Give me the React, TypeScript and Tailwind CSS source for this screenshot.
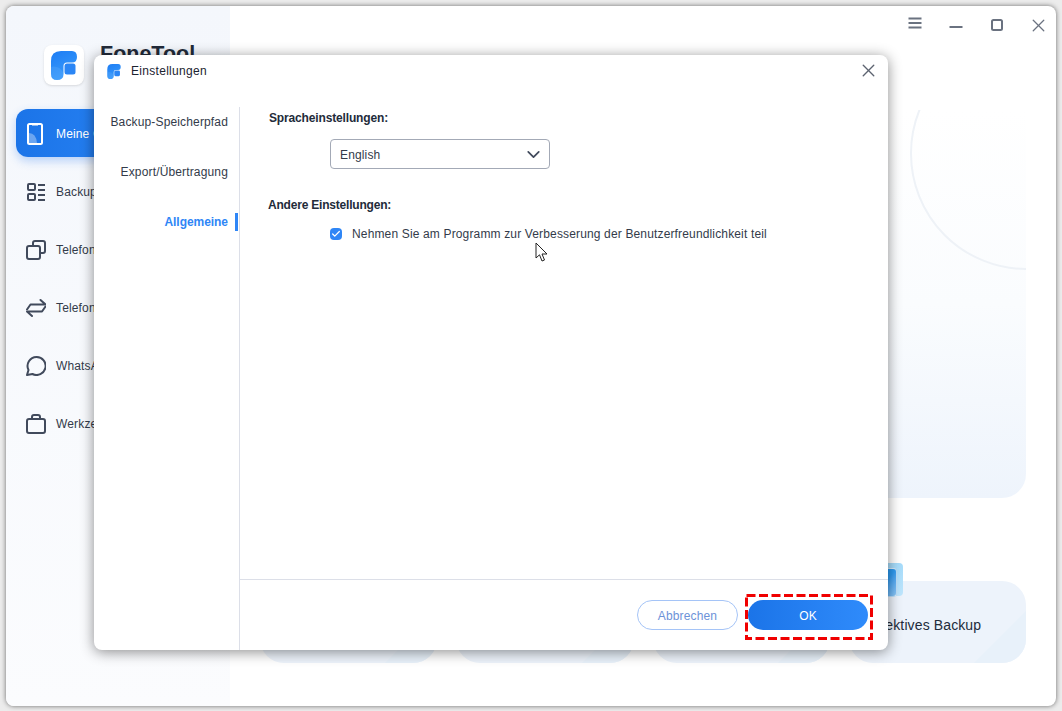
import { ChevronDown, Check, X } from "lucide-react";

function LogoMark({ id, width, height }: { id: string; width: number; height: number }) {
  return (
    <svg width={width} height={height} viewBox="0 0 26 29" className="shrink-0">
      <defs>
        <linearGradient id={id} x1="0.2" y1="0" x2="0.6" y2="1">
          <stop offset="0" stopColor="#1f7ff5" />
          <stop offset="1" stopColor="#3a9cfb" />
        </linearGradient>
      </defs>
      <path d="M10 0 H21 Q26 0 26 6 Q26 11.5 21 11.5 H16 Q12.5 11.5 12.5 15 V23 Q12.5 29 6 29 Q0 29 0 23 V10 Q0 0 10 0 Z" fill={`url(#${id})`} />
      <path d="M0 16 Q8 14 12.5 22 V23 Q12.5 29 6 29 Q0 29 0 23 Z" fill="#7cc0ff" opacity="0.2" />
      <rect x="13.5" y="12.5" width="11" height="11" rx="2.5" fill="#2b86f5" />
    </svg>
  );
}

function PhoneIcon() {
  return (
    <svg width="16" height="22" viewBox="0 0 16 22" fill="none">
      <rect x="1" y="1" width="14" height="20" rx="1.5" stroke="#fff" strokeWidth="2" />
      <path d="M5 1 H11 V2.5 H5 Z" fill="#fff" />
      <path d="M2 10 Q9 10 10 20 H2 Z" fill="#fff" opacity="0.35" />
    </svg>
  );
}

function NavIcon({ children }: { children: React.ReactNode }) {
  return (
    <svg width="20" height="20" viewBox="0 0 20 20" fill="none" stroke="#414a5c" strokeWidth="2" strokeLinecap="round" strokeLinejoin="round">
      {children}
    </svg>
  );
}

const navItems = [
  {
    label: "Backup",
    icon: (
      <NavIcon>
        <rect x="2" y="2" width="7" height="6" rx="1" />
        <rect x="2" y="12" width="7" height="6" rx="1" />
        <path d="M12 3 H19 M12 8 H19 M12 13 H19 M12 18 H19" strokeLinecap="butt" />
      </NavIcon>
    ),
  },
  {
    label: "Telefon-Klon",
    icon: (
      <NavIcon>
        <rect x="1" y="6" width="13" height="13" rx="2" />
        <path d="M7 5 V3 Q7 1 9 1 H17 Q19 1 19 3 V11 Q19 13 17 13 H15" />
      </NavIcon>
    ),
  },
  {
    label: "Telefon-Transfer",
    icon: (
      <NavIcon>
        <path d="M1 11.5 L4.5 6.5 H19.5 L14.5 2" />
        <path d="M19.5 8.5 L16 13.5 H1 L6 18" />
      </NavIcon>
    ),
  },
  {
    label: "WhatsApp",
    icon: (
      <NavIcon>
        <path d="M10.5 1 A9 9 0 1 1 6.5 18 L1 19 L2.5 14 A9 9 0 0 1 10.5 1 Z" />
      </NavIcon>
    ),
  },
  {
    label: "Werkzeuge",
    icon: (
      <NavIcon>
        <rect x="1" y="5" width="18" height="14" rx="2" />
        <path d="M6 5 V3 Q6 1 8 1 H12 Q14 1 14 3 V5" />
      </NavIcon>
    ),
  },
];

function Sidebar() {
  return (
    <aside className="w-[224px] shrink-0 bg-gradient-to-b from-[#f4f7fc] to-[#fbfcfe] pl-[10px] pt-[39px] tracking-[0.15px]">
      <div className="flex items-start gap-4 pl-[28px]">
        <div className="flex h-10 w-10 items-center justify-center rounded-lg bg-white shadow-sm">
          <LogoMark id="logo-big" width={26} height={29} />
        </div>
        <span className="-mt-[1px] text-[21.5px] font-bold leading-none tracking-normal text-[#222b3a]">FoneTool</span>
      </div>
      <div className="mt-6 flex h-12 w-[198px] items-center gap-[12px] rounded-xl bg-gradient-to-r from-[#1b74e8] to-[#2f8bfb] pl-[10px] pt-px text-xs text-white shadow-[0_4px_10px_rgba(40,120,240,0.3)]">
        <span className="flex w-[18px] justify-center"><PhoneIcon /></span>
        <span>Meine Geräte</span>
      </div>
      <div className="mt-[6px]">
        {navItems.map((item) => (
          <div key={item.label} className="flex h-[58px] items-center gap-[8px] pl-[8px] text-xs text-[#333b4a]">
            <span className="flex w-[24px] justify-center">{item.icon}</span>
            <span>{item.label}</span>
          </div>
        ))}
      </div>
    </aside>
  );
}

function BackupCard({ label, tile }: { label?: string; tile?: boolean }) {
  return (
    <div className="relative flex h-[82px] flex-1 items-center rounded-3xl bg-[#edf3fb] pl-[16px] pt-[6px] text-sm tracking-[0.12px] text-[#222b3a]">
      {tile && (
        <div className="absolute left-[24px] top-[-18px] h-[33px] w-[30px] rounded bg-gradient-to-b from-[#a6dcfb] to-[#bfe6fd]">
          <div className="mt-[5px] h-[29px] w-[24px] rounded-sm border border-white/70 bg-gradient-to-br from-[#0d94f2] via-[#2f9cf2] to-[#8cc8f8]" />
        </div>
      )}
      <svg className="absolute bottom-0 right-0 overflow-hidden rounded-br-3xl" width="130" height="82" viewBox="0 0 130 82">
        <path d="M130 30 L78 82 H130 Z" fill="#e8f1fa" />
      </svg>
      <span className="relative whitespace-nowrap">{label}</span>
    </div>
  );
}

function Main() {
  return (
    <main className="flex min-w-0 flex-1 flex-col pl-[30px] pr-[30px]">
      <div className="-mr-[30px] flex h-[38px] items-center justify-end gap-[5px] text-[#6a7280]">
        <span className="flex w-[36px] justify-center">
          <svg width="14" height="14" viewBox="0 0 14 14" stroke="currentColor" strokeWidth="2" className="-mt-[4px]">
            <path d="M0.5 2.5 H13.5 M0.5 7 H13.5 M0.5 11.5 H13.5" />
          </svg>
        </span>
        <span className="flex w-[36px] justify-center">
          <svg width="14" height="4" viewBox="0 0 14 4" stroke="currentColor" strokeWidth="2" className="mt-[4px]">
            <path d="M0.5 2 H13.5" />
          </svg>
        </span>
        <span className="flex w-[36px] justify-center">
          <svg width="12" height="12" viewBox="0 0 12 12" fill="none" stroke="currentColor" strokeWidth="2">
            <rect x="1" y="1" width="10" height="10" rx="1.5" />
          </svg>
        </span>
        <span className="flex w-[36px] justify-center">
          <X size={21} strokeWidth={1.5} />
        </span>
      </div>
      <div className="relative mt-[66px] h-[388px] overflow-hidden rounded-b-3xl bg-gradient-to-b from-white via-[#fafcfe] to-[#eef4fc]">
        <div className="absolute right-[-117px] top-[-73px] h-[233px] w-[233px] rounded-full border-2 border-[#eef2f7]" />
      </div>
      <div className="mt-[83px] flex gap-[19px]">
        <BackupCard />
        <BackupCard />
        <BackupCard />
        <BackupCard label="Selektives Backup" tile />
      </div>
    </main>
  );
}

function SettingsDialog() {
  return (
    <div className="absolute left-[94px] top-[55px] flex h-[595px] w-[794px] flex-col rounded-lg bg-white text-xs tracking-[0.15px] text-[#222b3a] shadow-[0_2px_14px_rgba(0,0,0,0.45)]">
      <header className="flex h-[52px] shrink-0 items-start pl-[13px] pr-[9px] pt-[8px]">
        <span className="mt-px"><LogoMark id="logo-small" width={14} height={15} /></span>
        <span className="ml-[10px] tracking-[0.3px] text-[#1c2330]">Einstellungen</span>
        <X size={21} strokeWidth={1.6} color="#5c6370" className="-mt-[3px] ml-auto" />
      </header>
      <div className="flex min-h-0 flex-1">
        <nav className="w-[146px] shrink-0 border-r border-[#dcdfe8] pr-[11px] text-right text-[#333b4a]">
          <div className="flex h-[30px] items-center justify-end">Backup-Speicherpfad</div>
          <div className="mt-[20px] flex h-[30px] items-center justify-end">Export/Übertragung</div>
          <div className="relative mt-[20px] flex h-[30px] items-center justify-end font-bold tracking-[-0.05px] text-[#2f86f6]">
            Allgemeine
            <span className="absolute right-[-10px] top-[6px] h-[18px] w-[3px] bg-[#2f86f6]" />
          </div>
        </nav>
        <div className="flex min-w-0 flex-1 flex-col">
          <div className="relative flex-1">
            <h3 className="ml-[29px] mt-[4px] font-bold leading-[14px] tracking-[-0.15px] text-[#222b3a]">Spracheinstellungen:</h3>
            <button className="ml-[90px] mt-[14px] flex h-[30px] w-[220px] items-center justify-between rounded border border-[#a3a9b6] pl-[9px] pr-[5px] pt-px text-[#333b4a]">
              English
              <ChevronDown size={21} strokeWidth={2} color="#414a5c" className="-mt-px" />
            </button>
            <h3 className="ml-[28px] mt-[29px] font-bold leading-[14px] tracking-[-0.2px] text-[#222b3a]">Andere Einstellungen:</h3>
            <label className="ml-[90px] mt-[14px] flex items-center gap-[10px] text-[#333b4a]">
              <span className="flex h-3 w-3 items-center justify-center rounded-sm bg-[#2f86f6]">
                <Check size={10} strokeWidth={3} color="#fff" />
              </span>
              Nehmen Sie am Programm zur Verbesserung der Benutzerfreundlichkeit teil
            </label>
            {/* mouse pointer in the screenshot */}
            <svg className="absolute left-[295px] top-[135px]" width="13" height="21" viewBox="0 0 13 21">
              <path d="M1 1 V16 L4.5 12.8 L7 19 L9.5 18 L7 12 H12 Z" fill="#fff" stroke="#222" strokeWidth="1" />
            </svg>
          </div>
          <footer className="flex h-[71px] shrink-0 items-start justify-end gap-[10px] border-t border-[#dcdfe8] pr-[20px] pt-[20px]">
            <button className="h-[30px] w-[101px] rounded-full border border-[#a5c4f7] pt-px text-[#6d92d8]">Abbrechen</button>
            <button className="h-[30px] w-[120px] rounded-full bg-gradient-to-r from-[#1b74e8] to-[#2f8bfb] pt-px text-white">OK</button>
          </footer>
        </div>
      </div>
      {/* red annotation round the OK button */}
      <svg className="absolute left-[651px] top-[539px]" width="128" height="46" viewBox="0 0 128 46" fill="none">
        <rect x="1.5" y="1.5" width="125" height="43" stroke="#f00000" strokeWidth="3" strokeDasharray="9 3.5" />
      </svg>
    </div>
  );
}

export default function App() {
  return (
    <div className="relative h-[711px] w-[1062px] overflow-hidden bg-[#ececec] p-[6px] font-['Liberation_Sans',Arial,sans-serif]">
      <div className="flex h-[700px] w-[1050px] overflow-hidden rounded-lg bg-white shadow-[0_0_5px_rgba(0,0,0,0.55)]">
        <Sidebar />
        <Main />
      </div>
      <SettingsDialog />
    </div>
  );
}
